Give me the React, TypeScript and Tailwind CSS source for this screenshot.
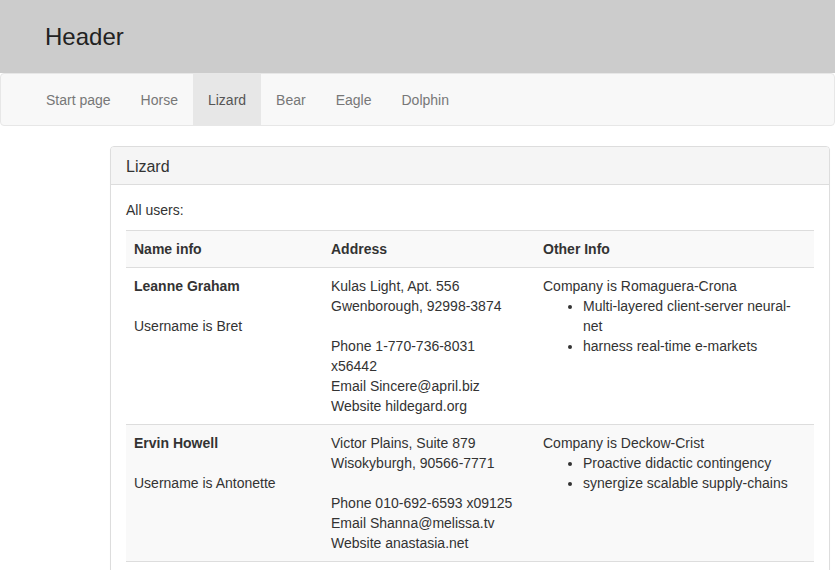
import React from "react";

const tabs = ["Start page", "Horse", "Lizard", "Bear", "Eagle", "Dolphin"];

export default function App() {
  return (
    <div
      className="min-h-[570px] bg-white text-[14px] leading-[20px] text-[#333]"
      style={{ fontFamily: '"Liberation Sans", Arial, sans-serif' }}
    >
      <div className="flex h-[73px] items-center bg-[#cccccc] pl-[45px]">
        <h3 className="text-[24px] leading-[26px] font-normal text-[#222]">Header</h3>
      </div>
      <nav className="h-[53px] rounded-[4px] border border-[#e7e7e7] bg-[#f8f8f8] pl-[30px]">
        <ul className="flex">
          {tabs.map((t) => (
            <li key={t}>
              <span
                className={
                  "block px-[15px] pt-[16px] pb-[15px] leading-[20px] " +
                  (t === "Lizard" ? "bg-[#e7e7e7] text-[#555]" : "text-[#777]")
                }
              >
                {t}
              </span>
            </li>
          ))}
        </ul>
      </nav>
      <div className="ml-[110px] mt-[20px] w-[720px] rounded-[4px] border border-[#dddddd] bg-white shadow-[0_1px_1px_rgba(0,0,0,0.05)]">
        <div className="rounded-t-[3px] border-b border-[#dddddd] bg-[#f5f5f5] px-[15px] pt-[11px] pb-[8px]">
          <h3 className="text-[16px] leading-[17.6px] font-normal text-[#333]">Lizard</h3>
        </div>
        <div className="p-[15px]">
          <p className="mb-[10px]">All users:</p>
          <table className="w-[688px] table-fixed border-collapse">
            <colgroup>
              <col className="w-[197px]" />
              <col className="w-[212px]" />
              <col className="w-[279px]" />
            </colgroup>
            <tbody>
              <tr className="bg-[#f9f9f9]">
                <th className="border-t border-[#dddddd] p-[8px] text-left align-top font-bold">Name info</th>
                <th className="border-t border-[#dddddd] p-[8px] text-left align-top font-bold">Address</th>
                <th className="border-t border-[#dddddd] p-[8px] text-left align-top font-bold">Other Info</th>
              </tr>
              <tr>
                <td className="border-t border-[#dddddd] p-[8px] align-top">
                  <b>Leanne Graham</b>
                  <br />
                  <br />
                  Username is Bret
                </td>
                <td className="border-t border-[#dddddd] p-[8px] align-top">
                  Kulas Light, Apt. 556
                  <br />
                  Gwenborough, 92998-3874
                  <br />
                  <br />
                  Phone 1-770-736-8031
                  <br />
                  x56442
                  <br />
                  Email Sincere@april.biz
                  <br />
                  Website hildegard.org
                </td>
                <td className="border-t border-[#dddddd] p-[8px] align-top">
                  Company is Romaguera-Crona
                  <ul className="list-disc pl-[40px]">
                    <li>Multi-layered client-server neural-net</li>
                    <li>harness real-time e-markets</li>
                  </ul>
                </td>
              </tr>
              <tr className="bg-[#f9f9f9]">
                <td className="border-t border-b border-[#dddddd] p-[8px] align-top">
                  <b>Ervin Howell</b>
                  <br />
                  <br />
                  Username is Antonette
                </td>
                <td className="border-t border-b border-[#dddddd] p-[8px] align-top">
                  Victor Plains, Suite 879
                  <br />
                  Wisokyburgh, 90566-7771
                  <br />
                  <br />
                  Phone 010-692-6593 x09125
                  <br />
                  Email Shanna@melissa.tv
                  <br />
                  Website anastasia.net
                </td>
                <td className="border-t border-b border-[#dddddd] p-[8px] align-top">
                  Company is Deckow-Crist
                  <ul className="list-disc pl-[40px]">
                    <li>Proactive didactic contingency</li>
                    <li>synergize scalable supply-chains</li>
                  </ul>
                </td>
              </tr>
            </tbody>
          </table>
        </div>
      </div>
    </div>
  );
}
